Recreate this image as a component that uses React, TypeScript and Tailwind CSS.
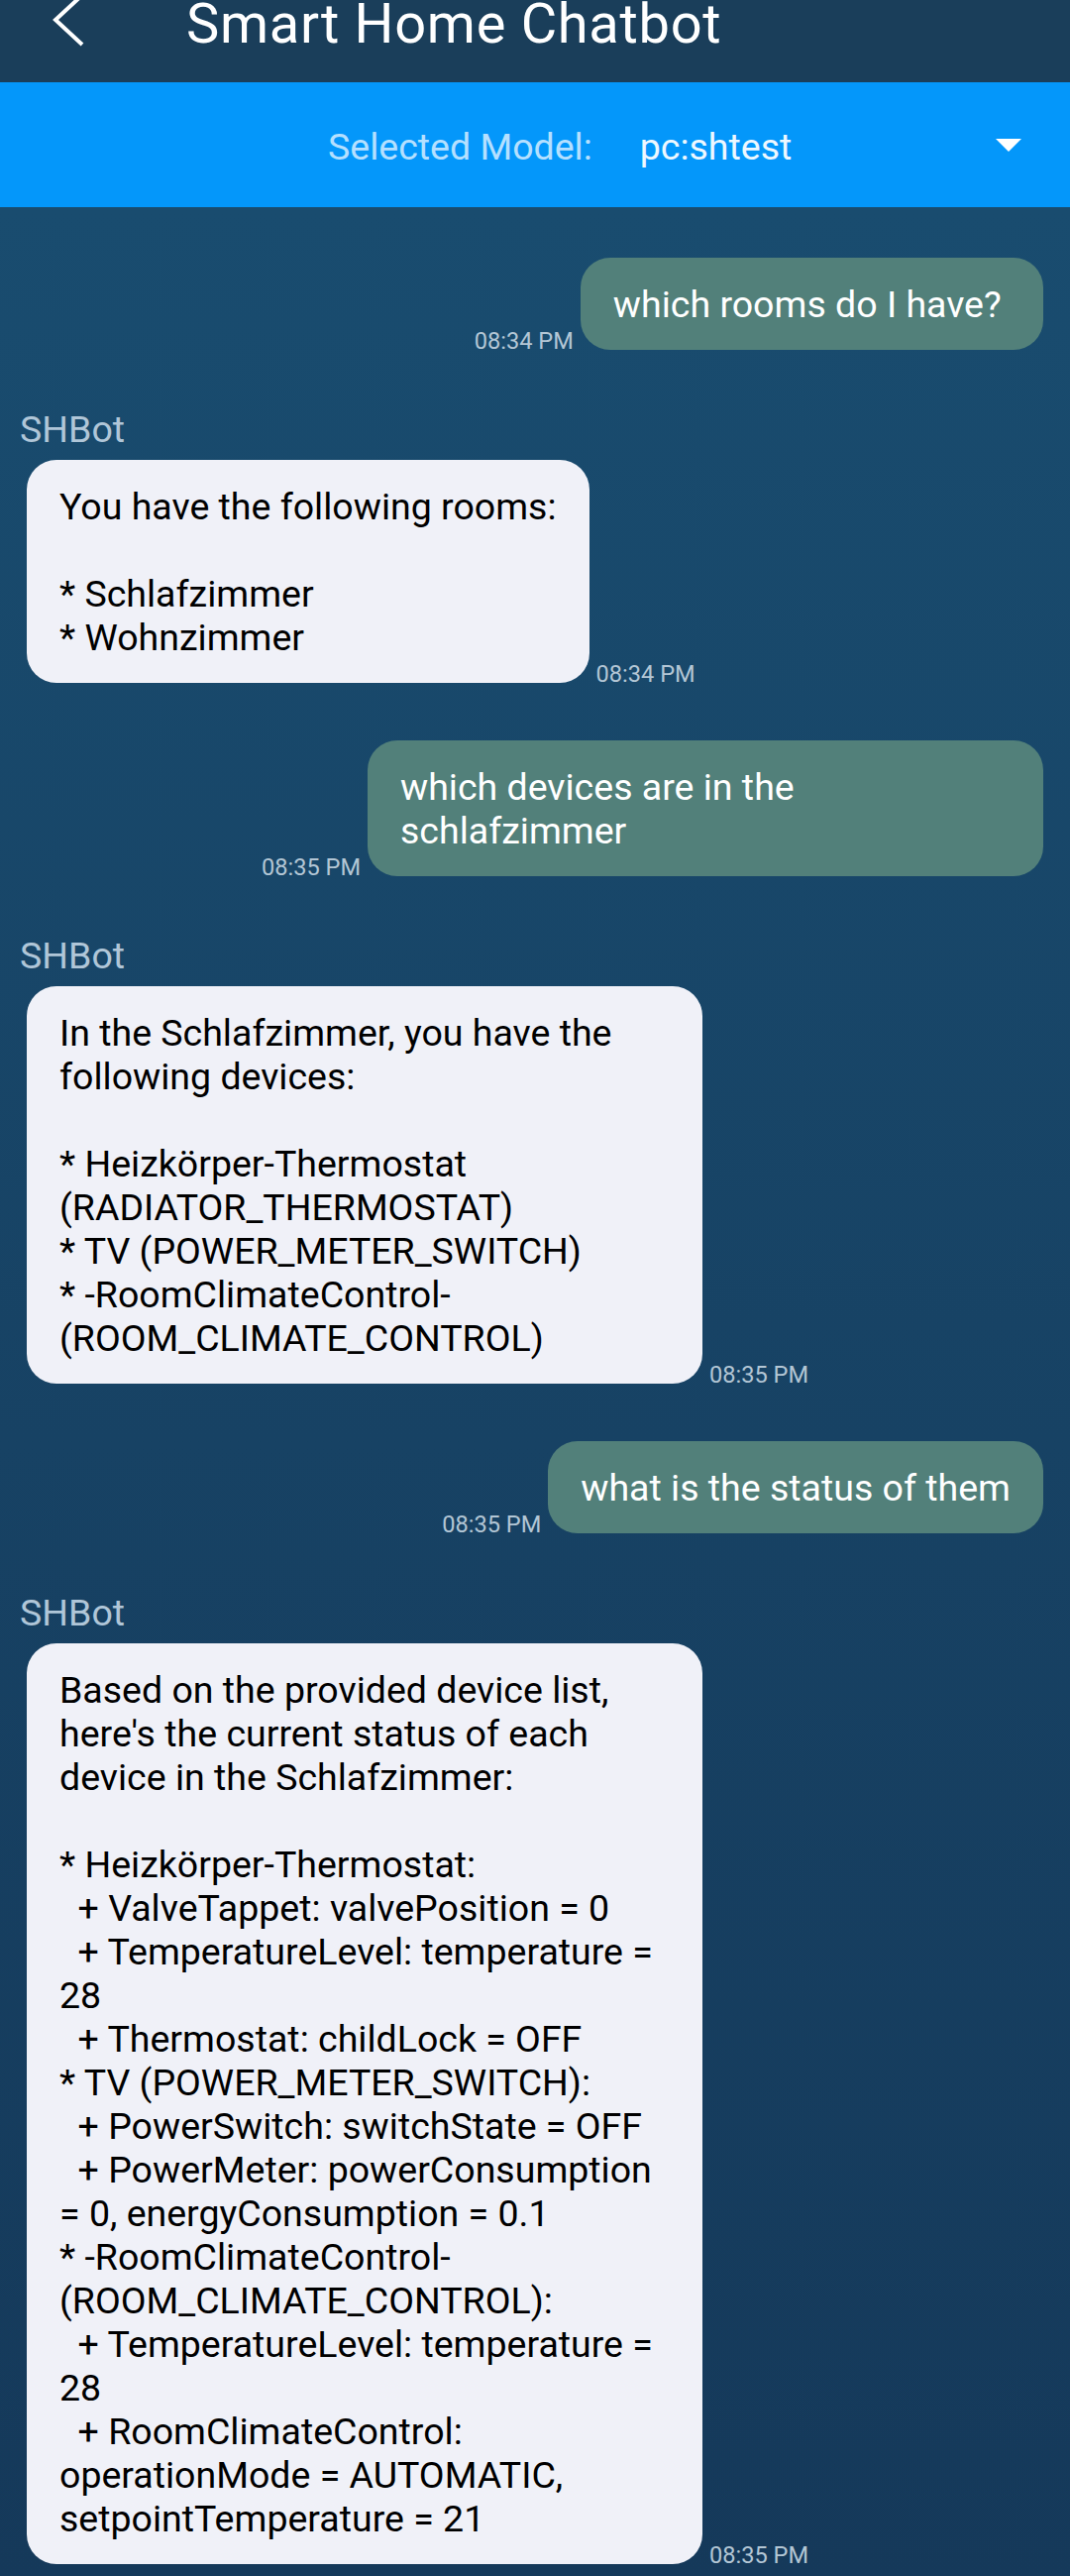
type Message = {
  from: 'user' | 'bot';
  text: string;
  time: string;
};

const messages: Message[] = [
  { from: 'user', text: 'which rooms do I have?\u00a0', time: '08:34 PM' },
  {
    from: 'bot',
    text: 'You have the following rooms:\n\n* Schlafzimmer\n* Wohnzimmer',
    time: '08:34 PM',
  },
  { from: 'user', text: 'which devices are in the schlafzimmer', time: '08:35 PM' },
  {
    from: 'bot',
    text:
      'In the Schlafzimmer, you have the following devices:\n\n' +
      '* Heizkörper-Thermostat (RADIATOR_THERMOSTAT)\n' +
      '* TV (POWER_METER_SWITCH)\n' +
      '* -RoomClimateControl- (ROOM_CLIMATE_CONTROL)',
    time: '08:35 PM',
  },
  { from: 'user', text: 'what is the status of them', time: '08:35 PM' },
  {
    from: 'bot',
    text:
      "Based on the provided device list, here's the current status of each device in the Schlafzimmer:\n\n" +
      '* Heizkörper-Thermostat:\n' +
      '  + ValveTappet: valvePosition = 0\n' +
      '  + TemperatureLevel: temperature = 28\n' +
      '  + Thermostat: childLock = OFF\n' +
      '* TV (POWER_METER_SWITCH):\n' +
      '  + PowerSwitch: switchState = OFF\n' +
      '  + PowerMeter: powerConsumption = 0, energyConsumption = 0.1\n' +
      '* -RoomClimateControl- (ROOM_CLIMATE_CONTROL):\n' +
      '  + TemperatureLevel: temperature = 28\n' +
      '  + RoomClimateControl: operationMode = AUTOMATIC, setpointTemperature = 21',
    time: '08:35 PM',
  },
];

function Time({ value }: { value: string }) {
  return (
    <span className="shrink-0 text-[23.6px] leading-none text-[#b3c6d5] -mb-[4px]">{value}</span>
  );
}

function UserMessage({ m }: { m: Message }) {
  return (
    <div className="flex justify-end items-end gap-[7px]">
      <Time value={m.time} />
      <div className="max-w-[682px] rounded-[30px] bg-[#52807a] px-[33px] pt-[25px] pb-[24px] text-[37.5px] leading-[44px] text-white whitespace-pre-wrap">
        {m.text}
      </div>
    </div>
  );
}

function BotMessage({ m }: { m: Message }) {
  return (
    <div className="flex flex-col items-start">
      <span className="-ml-[7px] mb-[9px] text-[37.5px] leading-[44px] text-[#b0c6d8]">SHBot</span>
      <div className="flex items-end gap-[7px]">
        <div className="max-w-[682px] rounded-[30px] bg-[#f0f1f8] px-[33px] pt-[25px] pb-[24px] text-[37.5px] leading-[44px] text-black whitespace-pre-wrap">
          {m.text}
        </div>
        <Time value={m.time} />
      </div>
    </div>
  );
}

export default function App() {
  return (
    <div className="min-h-[2599px] flex flex-col overflow-hidden font-[Roboto,'Liberation_Sans',sans-serif]">
      {/* App bar */}
      <header className="h-[83px] shrink-0 flex items-start bg-[#1a3e5a] text-white">
        <svg className="ml-[50px] -mt-[10px] w-[40px] h-[60px] shrink-0" viewBox="0 0 40 60" fill="none">
          <polyline points="33,5 6,30 33,55" stroke="white" strokeWidth="4" />
        </svg>
        <h1 className="ml-[98px] -mt-[4px] text-[56px] leading-[56px] tracking-[0.7px] font-normal whitespace-nowrap">
          Smart Home Chatbot
        </h1>
      </header>

      {/* Model selector */}
      <div className="h-[126px] shrink-0 flex items-center pt-[4px] pl-[331px] pr-[49px] bg-[#0497fa] text-[37.5px] leading-[44px]">
        <span className="text-[#b5e0ff]">Selected Model:</span>
        <span className="ml-[48px] text-[#eef8ff]">pc:shtest</span>
        <svg className="ml-auto -mt-[4px] w-[26px] h-[13px]" viewBox="0 0 26 13">
          <polygon points="0,0 26,0 13,13" fill="white" />
        </svg>
      </div>

      {/* Chat */}
      <main className="flex-1 flex flex-col gap-[58px] px-[27px] pt-[51px] pb-[11px] bg-linear-to-b from-[#194c6f] to-[#15395a]">
        {messages.map((m, i) =>
          m.from === 'user' ? <UserMessage key={i} m={m} /> : <BotMessage key={i} m={m} />
        )}
      </main>
    </div>
  );
}
